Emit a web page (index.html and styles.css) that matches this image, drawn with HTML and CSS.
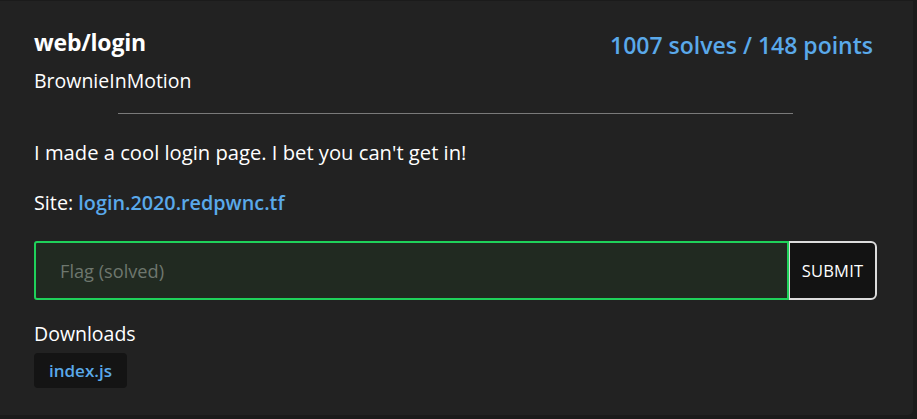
FILE: index.html
```html
<!DOCTYPE html>
<html>
<head>
<meta charset="utf-8">
<link rel="stylesheet" href="styles.css">
</head>
<body>
<div class="card">
  <div class="header">
    <div class="title-block">
      <h1 class="title">web/login</h1>
      <div class="author">BrownieInMotion</div>
    </div>
    <div class="score">1007 solves / 148 points</div>
  </div>
  <hr class="divider">
  <p class="desc">I made a cool login page. I bet you can't get in!</p>
  <p class="site">Site: <a class="link" href="#">login.2020.redpwnc.tf</a></p>
  <form class="flag-form">
    <input class="flag-input" type="text" placeholder="Flag (solved)">
    <button class="submit" type="button">SUBMIT</button>
  </form>
  <div class="downloads-label">Downloads</div>
  <div class="downloads">
    <a class="chip" href="#">index.js</a>
  </div>
</div>
</body>
</html>
```
FILE: styles.css
```css
html, body {
  margin: 0;
  padding: 0;
  background: #1b1b1b;
}
body {
  padding-top: 1px;
  font-family: "Open Sans", "Noto Sans", sans-serif;
  color: #ffffff;
}
.card {
  box-sizing: border-box;
  width: 913px;
  height: 414px;
  background: #222222;
  border-radius: 0 0 5px 0;
  padding: 26px 36px 0 34px;
}
.header {
  display: flex;
  justify-content: space-between;
  align-items: flex-start;
}
.title {
  margin: 0;
  font-size: 23px;
  font-weight: 700;
  line-height: 30px;
  letter-spacing: -0.2px;
}
.author {
  margin-top: 11px;
  font-size: 19.5px;
  line-height: 26px;
}
.score {
  color: #5aa9ea;
  font-size: 23px;
  font-weight: 600;
  line-height: 32px;
  margin-top: 2px;
  margin-right: 4px;
}
.divider {
  width: 80%;
  margin: 19px auto 0;
  border: 0;
  border-top: 1px solid #7a7a7a;
  height: 0;
}
.desc {
  margin: 24px 0 0;
  font-size: 20.2px;
  line-height: 28px;
}
.site {
  margin: 23px 0 0;
  font-size: 19.8px;
  line-height: 28px;
}
.link {
  color: #5aa9ea;
  font-weight: 600;
  text-decoration: none;
}
.flag-form {
  display: flex;
  margin-top: 24px;
  height: 59px;
}
.flag-input {
  flex: 1;
  box-sizing: border-box;
  height: 59px;
  margin: 0;
  background: #212a21;
  border: 2px solid #1fd15a;
  border-radius: 3px 0 0 3px;
  padding: 0 0 0 24px;
  color: #ffffff;
  font-family: inherit;
  font-size: 18.2px;
  outline: none;
}
.flag-input::placeholder {
  color: #6e776e;
}
.submit {
  box-sizing: border-box;
  width: 88px;
  height: 59px;
  margin: 0;
  background: #131313;
  border: 2px solid #dcdcdc;
  border-left-width: 1px;
  border-radius: 0 6px 6px 0;
  color: #ffffff;
  font-family: inherit;
  font-size: 16.5px;
  letter-spacing: 0.2px;
  padding: 0;
}
.downloads-label {
  margin-top: 21px;
  font-size: 19.5px;
  line-height: 26px;
}
.downloads {
  display: flex;
  margin-top: 6px;
}
.chip {
  display: inline-block;
  background: #141414;
  border-radius: 4px;
  padding: 0 15px;
  height: 35px;
  line-height: 35px;
  color: #5aa9ea;
  font-weight: 600;
  font-size: 17px;
  text-decoration: none;
}
```
